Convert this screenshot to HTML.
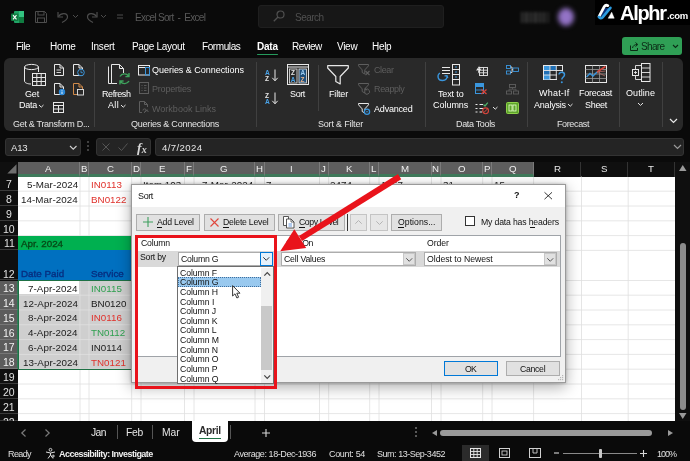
<!DOCTYPE html>
<html lang="en">
<head>
<meta charset="utf-8">
<title>Excel Sort - Excel</title>
<style>
*{box-sizing:border-box;margin:0;padding:0}
html,body{width:690px;height:461px;overflow:hidden;background:#0a0a0a}
body{font-family:"Liberation Sans",sans-serif;font-size:10px;color:#fff;position:relative}
.abs{position:absolute}
.t{position:absolute;white-space:pre;line-height:1;will-change:transform}
svg{overflow:visible;will-change:transform}
</style>
</head>
<body>
<div class="abs" style="left:0px;top:0px;width:690px;height:36px;background:#0a0a0a"></div>
<svg class="abs" style="left:11px;top:11px;" width="13" height="12" viewBox="0 0 13 12">
<rect x="3" y="0" width="10" height="12" rx="1" fill="#21a366"/>
<rect x="8" y="0" width="5" height="6" fill="#33c481"/>
<rect x="8" y="6" width="5" height="6" fill="#107c41"/>
<rect x="0" y="2.5" width="7.5" height="7.5" rx="1" fill="#107c41"/>
<path d="M2 4.2 L5.5 8.4 M5.5 4.2 L2 8.4" stroke="#fff" stroke-width="1.1"/>
</svg>
<svg class="abs" style="left:35px;top:11px;" width="12" height="12" viewBox="0 0 12 12">
<path d="M0.5 0.5 H9.5 L11.5 2.5 V11.5 H0.5 Z" fill="none" stroke="#4d4d4d" stroke-width="1"/>
<rect x="3" y="0.5" width="6" height="3.5" fill="none" stroke="#4d4d4d" stroke-width="1"/>
<rect x="2.5" y="7" width="7" height="4.5" fill="none" stroke="#4d4d4d" stroke-width="1"/>
</svg>
<svg class="abs" style="left:57px;top:11px;" width="13" height="12" viewBox="0 0 13 12">
<path d="M1 1 V6 H6" fill="none" stroke="#4d4d4d" stroke-width="1.2"/>
<path d="M1.5 5.5 C4 1.5 10.5 1.5 10.5 6 C10.5 8.5 8 10 5 11.5" fill="none" stroke="#4d4d4d" stroke-width="1.2"/>
</svg>
<svg class="abs" style="left:73px;top:15px;" width="5" height="3" viewBox="0 0 5 3"><path d="M0 0 L2.5 2.5 L5 0" fill="none" stroke="#4d4d4d" stroke-width="1"/></svg>
<svg class="abs" style="left:86px;top:11px;" width="13" height="12" viewBox="0 0 13 12">
<path d="M11 1 V6 H6" fill="none" stroke="#4d4d4d" stroke-width="1.2"/>
<path d="M10.5 5.5 C8 1.5 1.5 1.5 1.5 6 C1.5 8.5 4 10 7 11.5" fill="none" stroke="#4d4d4d" stroke-width="1.2"/>
</svg>
<svg class="abs" style="left:101px;top:15px;" width="5" height="3" viewBox="0 0 5 3"><path d="M0 0 L2.5 2.5 L5 0" fill="none" stroke="#4d4d4d" stroke-width="1"/></svg>
<svg class="abs" style="left:117px;top:14px;" width="6" height="6" viewBox="0 0 6 6"><path d="M0 1 H6 M0 4 H6" stroke="#4d4d4d" stroke-width="1"/></svg>
<div class="t" style="left:135.40px;top:12.54px;font-size:10px;color:#5a5a5a;letter-spacing:-0.713px;">Excel Sort  -  Excel</div>
<div class="abs" style="left:258px;top:5px;width:186px;height:23px;background:#171717;border:1px solid #1f1f1f;border-radius:3px"></div>
<svg class="abs" style="left:273px;top:10px;" width="12" height="12" viewBox="0 0 12 12"><circle cx="7.5" cy="4.5" r="3.5" fill="none" stroke="#505050" stroke-width="1.2"/><path d="M5 7 L0.8 11.2" stroke="#505050" stroke-width="1.3"/></svg>
<div class="t" style="left:294.50px;top:12.54px;font-size:10px;color:#505050;letter-spacing:-0.531px;">Search</div>
<div class="abs" style="left:521px;top:12px;width:28px;height:11px;background:repeating-linear-gradient(90deg,#3a3a3a 0 2px,#161616 2px 4.5px);filter:blur(1.6px);opacity:.9"></div>
<div class="abs" style="left:557.5px;top:8px;width:16px;height:18px;background:#9373c6;border-radius:50%;filter:blur(2.8px)"></div>
<div class="abs" style="left:595px;top:0px;width:95px;height:25px;background:#000"></div>
<svg class="abs" style="left:598px;top:4px;" width="17" height="16" viewBox="0 0 17 16">
<path d="M6.6 4.6 L10.2 4.6 L3.6 12 Z" fill="#0b2f7a" stroke="#0b2f7a" stroke-width="1"/>
<path d="M1.1 12.3 L6.3 2.5 Q7.7 0.5 9.9 1.7" fill="none" stroke="#fff" stroke-width="2.7" stroke-linecap="round"/>
<path d="M12.4 3.9 L4.6 13.3 Q2.6 15.3 0.9 13" fill="none" stroke="#2b9be0" stroke-width="2.7" stroke-linecap="round"/>
<path d="M13.7 8.2 L10.2 14.2 L16.2 14.2 Z" fill="#fff" stroke="#fff" stroke-width="0.5" stroke-linejoin="round"/>
</svg>
<div class="t" style="left:619.70px;top:2.57px;font-size:20px;color:#fff;letter-spacing:-1.303px;font-weight:bold;">Alphr</div>
<div class="t" style="left:666.80px;top:11.46px;font-size:9.5px;color:#fff;letter-spacing:-0.343px;font-weight:bold;">.com</div>
<div class="t" style="left:15.60px;top:41.53px;font-size:10px;color:#fff;letter-spacing:-0.528px;">File</div>
<div class="t" style="left:50.00px;top:41.53px;font-size:10px;color:#fff;letter-spacing:-0.269px;">Home</div>
<div class="t" style="left:91.40px;top:41.53px;font-size:10px;color:#fff;letter-spacing:-0.235px;">Insert</div>
<div class="t" style="left:132.40px;top:41.53px;font-size:10px;color:#fff;letter-spacing:-0.323px;">Page Layout</div>
<div class="t" style="left:201.60px;top:41.53px;font-size:10px;color:#fff;letter-spacing:-0.409px;">Formulas</div>
<div class="t" style="left:292.00px;top:41.53px;font-size:10px;color:#fff;letter-spacing:-0.498px;">Review</div>
<div class="t" style="left:336.70px;top:41.53px;font-size:10px;color:#fff;letter-spacing:-0.299px;">View</div>
<div class="t" style="left:371.70px;top:41.53px;font-size:10px;color:#fff;letter-spacing:-0.317px;">Help</div>
<div class="t" style="left:256.50px;top:41.53px;font-size:10px;color:#fff;letter-spacing:-0.219px;font-weight:bold;">Data</div>
<div class="abs" style="left:256.5px;top:53.5px;width:21px;height:1.3px;background:#259a5c;border-radius:1px"></div>
<div class="abs" style="left:622px;top:37px;width:60px;height:18px;background:#2f9f55;border-radius:3px"></div>
<svg class="abs" style="left:630px;top:42px;" width="9" height="9" viewBox="0 0 9 9"><path d="M0.5 3.5 V8.5 H7.5 V6" fill="none" stroke="#0b2b16" stroke-width="1"/><path d="M2.5 6 C3 3.5 5 2.5 7 2.5 M5.5 0.5 L7.8 2.5 L5.5 4.5" fill="none" stroke="#0b2b16" stroke-width="1"/></svg>
<div class="t" style="left:640.70px;top:41.53px;font-size:10px;color:#0b2b16;letter-spacing:-0.677px;">Share</div>
<svg class="abs" style="left:673px;top:45px;" width="5" height="3" viewBox="0 0 5 3"><path d="M0 0 L2.5 2.5 L5 0" fill="none" stroke="#0b2b16" stroke-width="1.1"/></svg>
<div class="abs" style="left:4px;top:58px;width:679px;height:73px;background:#292929;border-radius:6px"></div>
<div class="abs" style="left:94px;top:62px;width:1px;height:65px;background:#404040"></div>
<div class="abs" style="left:256px;top:62px;width:1px;height:65px;background:#404040"></div>
<div class="abs" style="left:424.5px;top:62px;width:1px;height:65px;background:#404040"></div>
<div class="abs" style="left:526.6px;top:62px;width:1px;height:65px;background:#404040"></div>
<div class="abs" style="left:619.4px;top:62px;width:1px;height:65px;background:#404040"></div>
<div class="abs" style="left:662px;top:62px;width:1px;height:65px;background:#404040"></div>
<div class="abs" style="left:317.7px;top:65px;width:1px;height:46px;background:#404040"></div>
<div class="t" style="left:12.50px;top:119.68px;font-size:9px;color:#e4e4e4;letter-spacing:-0.301px;">Get &amp; Transform D...</div>
<div class="t" style="left:131.00px;top:119.68px;font-size:9px;color:#e4e4e4;letter-spacing:-0.217px;">Queries &amp; Connections</div>
<div class="t" style="left:317.70px;top:119.68px;font-size:9px;color:#e4e4e4;letter-spacing:-0.193px;">Sort &amp; Filter</div>
<div class="t" style="left:456.00px;top:119.68px;font-size:9px;color:#e4e4e4;letter-spacing:-0.336px;">Data Tools</div>
<div class="t" style="left:557.00px;top:119.68px;font-size:9px;color:#e4e4e4;letter-spacing:-0.376px;">Forecast</div>
<svg class="abs" style="left:670px;top:119px;" width="7" height="4" viewBox="0 0 7 4"><path d="M0 0 L3.5 3.5 L7 0" fill="none" stroke="#e8e8e8" stroke-width="1.2"/></svg>
<svg class="abs" style="left:24px;top:64px;" width="22" height="23" viewBox="0 0 22 23">
<ellipse cx="7.5" cy="3" rx="7" ry="2.6" fill="none" stroke="#e8e8e8" stroke-width="1"/>
<path d="M0.5 3 V17 C0.5 19 4 20 7 20 M14.5 3 V8" fill="none" stroke="#e8e8e8" stroke-width="1"/>
<rect x="8.5" y="9.5" width="13" height="12" fill="#292929" stroke="#e8e8e8" stroke-width="1"/>
<path d="M8.5 13.5 H21.5 M8.5 17.5 H21.5 M12.8 9.5 V21.5 M17.2 9.5 V21.5" stroke="#e8e8e8" stroke-width="1"/>
</svg>
<div class="t" style="left:25.00px;top:89.88px;font-size:9px;color:#fff;letter-spacing:-0.169px;">Get</div>
<div class="t" style="left:19.00px;top:101.38px;font-size:9px;color:#fff;letter-spacing:-0.253px;">Data</div>
<svg class="abs" style="left:39px;top:104.5px;" width="4.5" height="3" viewBox="0 0 4.5 3"><path d="M0 0 L2.25 2.2 L4.5 0" fill="none" stroke="#e8e8e8" stroke-width="1"/></svg>
<svg class="abs" style="left:53.5px;top:64px;" width="11" height="12" viewBox="0 0 11 12"><path d="M0.5 0.5 H6 L9.5 4 V11.5 H0.5 Z M6 0.5 V4 H9.5" fill="none" stroke="#e8e8e8" stroke-width="1"/><path d="M2.5 6 H7 M2.5 8.5 H7" stroke="#e8e8e8" stroke-width="0.9"/></svg>
<svg class="abs" style="left:73px;top:64px;" width="11" height="12" viewBox="0 0 11 12"><path d="M0.5 0.5 H6 L9.5 4 V11.5 H0.5 Z M6 0.5 V4 H9.5" fill="none" stroke="#e8e8e8" stroke-width="1"/><circle cx="8" cy="8.5" r="3.3" fill="#292929" stroke="#3a96dd" stroke-width="1"/><path d="M8 6.5 V8.7 H9.8" stroke="#3a96dd" stroke-width="0.9" fill="none"/></svg>
<svg class="abs" style="left:53.5px;top:82.5px;" width="11" height="12" viewBox="0 0 11 12"><path d="M0.5 0.5 H6 L9.5 4 V11.5 H0.5 Z M6 0.5 V4 H9.5" fill="none" stroke="#e8e8e8" stroke-width="1"/><circle cx="8" cy="9" r="3.2" fill="#2b88d8"/><path d="M8 7.2 V7.9 M8 8.6 V11" stroke="#fff" stroke-width="0.9"/></svg>
<svg class="abs" style="left:73px;top:82.5px;" width="11" height="12" viewBox="0 0 11 12"><path d="M0.5 0.5 H6 L9.5 4 V11.5 H0.5 Z M6 0.5 V4 H9.5" fill="none" stroke="#d08a4a" stroke-width="1"/><rect x="4.5" y="6.5" width="6" height="5.5" fill="#292929" stroke="#e8e8e8" stroke-width="0.9"/></svg>
<svg class="abs" style="left:53px;top:101.5px;" width="11" height="11" viewBox="0 0 11 11"><rect x="0.5" y="0.5" width="10" height="10" fill="none" stroke="#e8e8e8" stroke-width="1"/><path d="M0.5 3.5 H10.5 M0.5 7 H10.5 M5.5 3.5 V10.5" stroke="#e8e8e8" stroke-width="1"/></svg>
<svg class="abs" style="left:108px;top:64px;" width="23" height="23" viewBox="0 0 23 23">
<path d="M0.5 2.5 V19.5 H3.5" fill="none" stroke="#e8e8e8" stroke-width="1"/>
<path d="M3.5 0.5 H11.5 L15.5 4.5 V9 M3.5 0.5 V19.5 H9 M11.5 0.5 V4.5 H15.5" fill="none" stroke="#e8e8e8" stroke-width="1"/>
<path d="M12 12.5 A5 5 0 0 1 20.5 12 M21 9 V12.6 H17.4" fill="none" stroke="#3ea35c" stroke-width="1.4"/>
<path d="M21 17 A5 5 0 0 1 12.5 17.5 M12 20.6 V17 H15.6" fill="none" stroke="#3ea35c" stroke-width="1.4"/>
</svg>
<div class="t" style="left:102.00px;top:89.88px;font-size:9px;color:#fff;letter-spacing:-0.430px;">Refresh</div>
<div class="t" style="left:107.50px;top:101.38px;font-size:9px;color:#fff;letter-spacing:0.333px;">All</div>
<svg class="abs" style="left:120.5px;top:104.5px;" width="4.5" height="3" viewBox="0 0 4.5 3"><path d="M0 0 L2.25 2.2 L4.5 0" fill="none" stroke="#e8e8e8" stroke-width="1"/></svg>
<svg class="abs" style="left:138px;top:64.5px;" width="12" height="10.5" viewBox="0 0 12 10.5"><rect x="0.5" y="0.5" width="11" height="9.5" fill="none" stroke="#e8e8e8" stroke-width="1"/><path d="M0.5 2.5 H11.5" stroke="#e8e8e8" stroke-width="1"/><rect x="7.5" y="2.5" width="4" height="7.5" fill="none" stroke="#3a96dd" stroke-width="1"/></svg>
<div class="t" style="left:152.00px;top:65.98px;font-size:9px;color:#fff;letter-spacing:-0.026px;">Queries &amp; Connections</div>
<svg class="abs" style="left:138.5px;top:82px;" width="10" height="12" viewBox="0 0 10 12"><rect x="0.5" y="0.5" width="9" height="11" fill="none" stroke="#5e5e5e" stroke-width="1"/><path d="M2.5 3.5 H3.5 M5 3.5 H7.5 M2.5 6 H3.5 M5 6 H7.5 M2.5 8.5 H3.5 M5 8.5 H7.5" stroke="#5e5e5e" stroke-width="0.9"/></svg>
<div class="t" style="left:152.00px;top:85.38px;font-size:9px;color:#5e5e5e;letter-spacing:-0.202px;">Properties</div>
<svg class="abs" style="left:138.5px;top:101px;" width="11" height="12.5" viewBox="0 0 11 12.5"><path d="M0.5 0.5 H5.5 L8.5 3.5 V6 M0.5 0.5 V11.5 H3 M5.5 0.5 V3.5 H8.5" fill="none" stroke="#5e5e5e" stroke-width="1"/><path d="M4 9.5 a1.6 1.6 0 0 1 3.2 0 M6 11 a1.6 1.6 0 0 1 3.2 0 M5 11.8 L8.5 8.8" fill="none" stroke="#5e5e5e" stroke-width="1"/></svg>
<div class="t" style="left:152.00px;top:104.68px;font-size:9px;color:#5e5e5e;letter-spacing:0.010px;">Workbook Links</div>
<svg class="abs" style="left:265px;top:68.5px;" width="14" height="13" viewBox="0 0 14 13">
<text x="0" y="5.6" font-family="Liberation Sans,sans-serif" font-size="6.6" font-weight="bold" fill="#4aa3e8">A</text>
<text x="0" y="12.4" font-family="Liberation Sans,sans-serif" font-size="6.6" font-weight="bold" fill="#e8e8e8">Z</text>
<path d="M10 0.5 V11.5 M7.3 8.8 L10 11.8 L12.7 8.8" fill="none" stroke="#e8e8e8" stroke-width="1"/></svg>
<svg class="abs" style="left:265px;top:92px;" width="14" height="13" viewBox="0 0 14 13">
<text x="0" y="5.6" font-family="Liberation Sans,sans-serif" font-size="6.6" font-weight="bold" fill="#e8e8e8">Z</text>
<text x="0" y="12.4" font-family="Liberation Sans,sans-serif" font-size="6.6" font-weight="bold" fill="#4aa3e8">A</text>
<path d="M10 0.5 V11.5 M7.3 8.8 L10 11.8 L12.7 8.8" fill="none" stroke="#e8e8e8" stroke-width="1"/></svg>
<svg class="abs" style="left:287px;top:64px;" width="22" height="21" viewBox="0 0 22 21">
<rect x="0.5" y="0.5" width="21" height="20" fill="none" stroke="#e8e8e8" stroke-width="1"/>
<path d="M0.5 3 H21.5" stroke="#e8e8e8" stroke-width="1"/>
<rect x="2.5" y="5" width="7.5" height="14" fill="none" stroke="#e8e8e8" stroke-width="0.8"/>
<rect x="12" y="5" width="7.5" height="14" fill="#1f4e79" stroke="#e8e8e8" stroke-width="0.8"/>
<text x="4" y="11" font-family="Liberation Sans,sans-serif" font-size="6.4" font-weight="bold" fill="#e8e8e8">Z</text>
<text x="3.8" y="17.8" font-family="Liberation Sans,sans-serif" font-size="6.4" font-weight="bold" fill="#4aa3e8">A</text>
<text x="13.4" y="11" font-family="Liberation Sans,sans-serif" font-size="6.4" font-weight="bold" fill="#9ccbf0">A</text>
<text x="13.6" y="17.8" font-family="Liberation Sans,sans-serif" font-size="6.4" font-weight="bold" fill="#e8b28a">Z</text>
</svg>
<div class="t" style="left:289.50px;top:89.88px;font-size:9px;color:#fff;letter-spacing:-0.377px;">Sort</div>
<svg class="abs" style="left:327px;top:65px;" width="22" height="21" viewBox="0 0 22 21"><path d="M0.7 0.7 H21.3 V3 L13.2 11.5 V19 L8.8 16.5 V11.5 L0.7 3 Z" fill="none" stroke="#e8e8e8" stroke-width="1.2" stroke-linejoin="round"/></svg>
<div class="t" style="left:329.00px;top:89.88px;font-size:9px;color:#fff;letter-spacing:-0.167px;">Filter</div>
<svg class="abs" style="left:358px;top:64px;" width="13" height="12" viewBox="0 0 13 12"><path d="M0.5 0.5 H10.5 V1.8 L6.8 5.9 V10.0 L4.2 8.5 V5.9 L0.5 1.8 Z" fill="none" stroke="#5e5e5e" stroke-width="1" stroke-linejoin="round"/><path d="M7.5 7 L11.5 11 M11.5 7 L7.5 11" stroke="#5e5e5e" stroke-width="1.1"/></svg>
<div class="t" style="left:373.50px;top:65.98px;font-size:9px;color:#5e5e5e;letter-spacing:-0.401px;">Clear</div>
<svg class="abs" style="left:358px;top:83px;" width="13" height="12" viewBox="0 0 13 12"><path d="M0.5 0.5 H10.5 V1.8 L6.8 5.9 V10.0 L4.2 8.5 V5.9 L0.5 1.8 Z" fill="none" stroke="#5e5e5e" stroke-width="1" stroke-linejoin="round"/><path d="M6.5 9.5 a2.6 2.6 0 1 0 1 -3 M7.3 4.7 V6.8 H9.4" fill="none" stroke="#5e5e5e" stroke-width="1"/></svg>
<div class="t" style="left:373.50px;top:85.38px;font-size:9px;color:#5e5e5e;letter-spacing:-0.360px;">Reapply</div>
<svg class="abs" style="left:358px;top:102.5px;" width="13" height="12" viewBox="0 0 13 12"><path d="M0.5 0.5 H10.5 V1.8 L6.8 5.9 V10.0 L4.2 8.5 V5.9 L0.5 1.8 Z" fill="none" stroke="#e8e8e8" stroke-width="1" stroke-linejoin="round"/><circle cx="9" cy="8.8" r="2.6" fill="#292929" stroke="#3a96dd" stroke-width="1.3"/><circle cx="9" cy="8.8" r="0.8" fill="#3a96dd"/></svg>
<div class="t" style="left:373.50px;top:104.68px;font-size:9px;color:#fff;letter-spacing:-0.191px;">Advanced</div>
<svg class="abs" style="left:438px;top:64px;" width="24" height="22" viewBox="0 0 24 22">
<path d="M4 3.5 H12 M4 6.5 H12 M4 9.5 H12" stroke="#e8e8e8" stroke-width="1"/>
<path d="M2 9 C-1.2 11 -0.6 16.5 4.5 16.5 C8 16.5 9.5 14 9 12 M6.5 11.8 L9 11.6 L9.8 14" fill="none" stroke="#3a96dd" stroke-width="1.3"/>
<rect x="14.5" y="0.5" width="7" height="20.5" fill="none" stroke="#e8e8e8" stroke-width="1"/>
<path d="M14.5 5.5 H21.5 M14.5 10.5 H21.5 M14.5 15.5 H21.5" stroke="#e8e8e8" stroke-width="1"/>
<path d="M17 3 H19 M17 8 H19 M17 13 H19" stroke="#3a96dd" stroke-width="0.9"/>
</svg>
<div class="t" style="left:438.00px;top:90.08px;font-size:9px;color:#fff;letter-spacing:-0.145px;">Text to</div>
<div class="t" style="left:432.70px;top:101.38px;font-size:9px;color:#fff;letter-spacing:-0.030px;">Columns</div>
<svg class="abs" style="left:474.5px;top:64.5px;" width="13" height="11" viewBox="0 0 13 11"><rect x="4.5" y="2.5" width="8" height="8" fill="none" stroke="#e8e8e8" stroke-width="0.9"/><path d="M4.5 5.2 H12.5 M4.5 7.8 H12.5 M8.5 2.5 V10.5" stroke="#e8e8e8" stroke-width="0.9"/><path d="M1 5.5 L4.5 0.5 L3.6 4 L6.5 3.4 L2.8 8.8 L3.4 5.2 Z" fill="#e8e8e8"/></svg>
<svg class="abs" style="left:475px;top:83px;" width="13" height="12" viewBox="0 0 13 12"><rect x="0.5" y="0.5" width="8" height="10" fill="none" stroke="#3a96dd" stroke-width="1"/><rect x="0.5" y="0.5" width="8" height="3.5" fill="#3a96dd"/><path d="M0.5 7 H8.5" stroke="#3a96dd" stroke-width="0.9"/><path d="M6.5 6.5 L11.5 11 M11.5 6.5 L6.5 11" stroke="#d8453b" stroke-width="1.3"/></svg>
<svg class="abs" style="left:474.5px;top:101.5px;" width="14" height="12" viewBox="0 0 14 12"><path d="M0.5 2.5 H2.5 M4.5 2.5 H8 M0.5 6.5 H2.5 M4.5 6.5 H8 M0.5 10 H2.5 M4.5 10 H7" stroke="#e8e8e8" stroke-width="1.1"/><path d="M8.5 2.5 L10 4 L12.8 0.6" fill="none" stroke="#4fb06a" stroke-width="1.2"/><circle cx="10.6" cy="8.8" r="2.9" fill="none" stroke="#d8453b" stroke-width="1.1"/><path d="M8.6 10.8 L12.6 6.8" stroke="#d8453b" stroke-width="1"/></svg>
<svg class="abs" style="left:492.5px;top:107px;" width="4.5" height="3" viewBox="0 0 4.5 3"><path d="M0 0 L2.25 2.2 L4.5 0" fill="none" stroke="#e8e8e8" stroke-width="1"/></svg>
<svg class="abs" style="left:506px;top:65px;" width="13" height="10" viewBox="0 0 13 10"><rect x="0.5" y="0.5" width="4" height="3" fill="none" stroke="#3a96dd" stroke-width="0.9"/><rect x="0.5" y="6" width="4" height="3" fill="none" stroke="#3a96dd" stroke-width="0.9"/><rect x="7" y="3" width="5.5" height="3.5" fill="none" stroke="#3a96dd" stroke-width="0.9"/><path d="M4.5 2 H6 V7.5 H4.5 M6 4.8 H7" fill="none" stroke="#e8e8e8" stroke-width="0.8"/></svg>
<svg class="abs" style="left:506px;top:83.5px;" width="13" height="11" viewBox="0 0 13 11"><rect x="3.5" y="0.5" width="6" height="3" fill="none" stroke="#5e5e5e" stroke-width="0.9"/><rect x="0.5" y="7" width="5" height="3" fill="none" stroke="#5e5e5e" stroke-width="0.9"/><rect x="7.5" y="7" width="5" height="3" fill="none" stroke="#5e5e5e" stroke-width="0.9"/><path d="M6.5 3.5 V5.2 M3 7 V5.2 H10 V7" fill="none" stroke="#5e5e5e" stroke-width="0.8"/></svg>
<svg class="abs" style="left:506px;top:101.5px;" width="13" height="12" viewBox="0 0 13 12"><rect x="0.5" y="0.5" width="12" height="11" rx="1" fill="#5da42a" stroke="#8fd14a" stroke-width="1"/><rect x="3" y="3" width="3" height="6" fill="none" stroke="#eaffd0" stroke-width="0.8"/><rect x="7" y="3" width="3" height="6" fill="none" stroke="#eaffd0" stroke-width="0.8"/></svg>
<svg class="abs" style="left:543px;top:65px;" width="24" height="19" viewBox="0 0 24 19">
<rect x="0.5" y="0.5" width="19" height="14" fill="none" stroke="#e8e8e8" stroke-width="1"/>
<rect x="1" y="1" width="6" height="4.5" fill="#3a96dd"/><rect x="7.3" y="1" width="6" height="4.5" fill="#1f6fb5"/>
<rect x="1" y="5.5" width="6" height="4.5" fill="#1f6fb5"/><rect x="1" y="10" width="6" height="4.5" fill="#3a96dd"/>
<path d="M0.5 5.5 H19.5 M0.5 10 H19.5 M7 0.5 V14.5 M13.3 0.5 V14.5" stroke="#e8e8e8" stroke-width="0.9"/>
<rect x="14" y="6.5" width="10" height="12" fill="#292929"/>
<path d="M16 9.5 C16 6.5 21.5 6.5 21.5 9.8 C21.5 12 18.8 12 18.8 14.5" fill="none" stroke="#3a96dd" stroke-width="1.5"/><circle cx="18.8" cy="17.2" r="1" fill="#3a96dd"/>
</svg>
<div class="t" style="left:539.00px;top:89.38px;font-size:9px;color:#fff;letter-spacing:0.214px;">What-If</div>
<div class="t" style="left:533.60px;top:100.98px;font-size:9px;color:#fff;letter-spacing:-0.202px;">Analysis</div>
<svg class="abs" style="left:568px;top:104px;" width="4.5" height="3" viewBox="0 0 4.5 3"><path d="M0 0 L2.25 2.2 L4.5 0" fill="none" stroke="#e8e8e8" stroke-width="1"/></svg>
<svg class="abs" style="left:584.5px;top:65px;" width="22" height="18" viewBox="0 0 22 18">
<rect x="0.5" y="0.5" width="21" height="17" fill="none" stroke="#e8e8e8" stroke-width="1"/>
<path d="M0.5 4.5 H21.5 M0.5 9 H21.5 M0.5 13.5 H21.5 M7.5 0.5 V17.5 M14.5 0.5 V17.5" stroke="#9a9a9a" stroke-width="0.8"/>
<path d="M1.5 12 L5 8.5 L8 11 L12 7" fill="none" stroke="#3a96dd" stroke-width="1.3"/>
<path d="M12 7 L20.5 1.5" fill="none" stroke="#d8453b" stroke-width="1.5"/>
<path d="M12 7 L20.5 6 M12 7 L20 11" fill="none" stroke="#b46a62" stroke-width="0.8"/>
</svg>
<div class="t" style="left:579.00px;top:89.38px;font-size:9px;color:#fff;letter-spacing:-0.251px;">Forecast</div>
<div class="t" style="left:585.00px;top:100.98px;font-size:9px;color:#fff;letter-spacing:-0.304px;">Sheet</div>
<svg class="abs" style="left:631.5px;top:63px;" width="18.5" height="19" viewBox="0 0 18.5 19">
<rect x="9.5" y="0.5" width="8.5" height="18" fill="none" stroke="#e8e8e8" stroke-width="1"/>
<path d="M9.5 5 H18 M9.5 9.5 H18 M9.5 14 H18" stroke="#e8e8e8" stroke-width="0.9"/>
<rect x="0.5" y="6.5" width="6" height="6" fill="none" stroke="#e8e8e8" stroke-width="1"/>
<path d="M2 9.5 H5 M3.5 8 V11" stroke="#e8e8e8" stroke-width="0.9"/>
<path d="M3.5 6.5 V2.5 H9.5 M3.5 12.5 V16.5 H9.5" fill="none" stroke="#e8e8e8" stroke-width="0.9"/>
</svg>
<div class="t" style="left:626.00px;top:88.68px;font-size:9px;color:#fff;letter-spacing:0.069px;">Outline</div>
<svg class="abs" style="left:637.5px;top:103px;" width="5" height="3" viewBox="0 0 5 3"><path d="M0 0 L2.5 2.4 L5 0" fill="none" stroke="#e8e8e8" stroke-width="1"/></svg>
<div class="abs" style="left:0px;top:131px;width:690px;height:31px;background:#0a0a0a"></div>
<div class="abs" style="left:5px;top:137.6px;width:76px;height:18.7px;background:#242424;border:1px solid #333;border-radius:3px"></div>
<div class="t" style="left:10.70px;top:142.87px;font-size:9.6px;color:#e6e6e6;letter-spacing:-0.260px;">A13</div>
<svg class="abs" style="left:69.5px;top:145.5px;" width="6.5" height="4" viewBox="0 0 6.5 4"><path d="M0 0 L3.25 3.2 L6.5 0" fill="none" stroke="#d0d0d0" stroke-width="1.1"/></svg>
<svg class="abs" style="left:87.3px;top:141px;" width="2" height="10" viewBox="0 0 2 10"><circle cx="1" cy="1" r="0.8" fill="#8a8a8a"/><circle cx="1" cy="5" r="0.8" fill="#8a8a8a"/><circle cx="1" cy="9" r="0.8" fill="#8a8a8a"/></svg>
<div class="abs" style="left:96px;top:137.6px;width:55px;height:18.7px;background:#242424;border:1px solid #333;border-radius:3px"></div>
<svg class="abs" style="left:102px;top:143px;" width="8" height="8" viewBox="0 0 8 8"><path d="M0.5 0.5 L7.5 7.5 M7.5 0.5 L0.5 7.5" stroke="#555" stroke-width="1"/></svg>
<svg class="abs" style="left:118px;top:143px;" width="10" height="8" viewBox="0 0 10 8"><path d="M0.5 4.5 L3.5 7.5 L9.5 0.5" fill="none" stroke="#555" stroke-width="1"/></svg>
<div class="t" style="left:137px;top:140.6px;font-size:13.5px;color:#d8d8d8;font-family:&quot;Liberation Serif&quot;,serif;font-style:italic;font-weight:bold;letter-spacing:0.3px">f<span style="font-size:10px;position:relative;top:1px">x</span></div>
<div class="abs" style="left:154.5px;top:137.6px;width:529.5px;height:18.7px;background:#242424;border:1px solid #333;border-radius:3px"></div>
<div class="t" style="left:162.00px;top:142.87px;font-size:9.6px;color:#e6e6e6;letter-spacing:0.391px;">4/7/2024</div>
<svg class="abs" style="left:673.5px;top:144.5px;" width="7" height="4" viewBox="0 0 7 4"><path d="M0 0 L3.5 3.4 L7 0" fill="none" stroke="#9a9a9a" stroke-width="1.2"/></svg>
<div class="abs" style="left:0px;top:162px;width:690px;height:259px;background:#0f0f0f"></div>
<div class="abs" style="left:18px;top:176.5px;width:657px;height:244.5px;background:#fff"></div>
<div class="abs" style="left:18px;top:235.6px;width:114px;height:14.8px;background:#00b050"></div>
<div class="abs" style="left:18px;top:250.4px;width:114px;height:30.1px;background:#0070c0"></div>
<div class="abs" style="left:18px;top:280.5px;width:515.6px;height:88.7px;background:#cfcfcf"></div>
<div class="abs" style="left:18.8px;top:281.3px;width:60.4px;height:13.2px;background:#fff"></div>
<svg class="abs" style="left:0px;top:0px;pointer-events:none" width="690" height="461" viewBox="0 0 690 461"><g stroke="#e0e0e0" stroke-width="0.8" fill="none"><path d="M80 176.5 V421"/><path d="M89 176.5 V421"/><path d="M131.7 176.5 V421"/><path d="M141 176.5 V421"/><path d="M184.5 176.5 V421"/><path d="M194 176.5 V421"/><path d="M255 176.5 V421"/><path d="M264.5 176.5 V421"/><path d="M319.5 176.5 V421"/><path d="M328.7 176.5 V421"/><path d="M369.7 176.5 V421"/><path d="M379 176.5 V421"/><path d="M431.5 176.5 V421"/><path d="M441 176.5 V421"/><path d="M482.7 176.5 V421"/><path d="M492 176.5 V421"/><path d="M533.6 176.5 V421"/><path d="M581.5 176.5 V421"/><path d="M628.2 176.5 V421"/><path d="M18 191.2 H675"/><path d="M18 206 H675"/><path d="M18 220.8 H675"/><path d="M18 235.6 H675"/><path d="M18 250.4 H675"/><path d="M18 280.5 H675"/><path d="M18 295.2 H675"/><path d="M18 310 H675"/><path d="M18 324.8 H675"/><path d="M18 339.6 H675"/><path d="M18 354.4 H675"/><path d="M18 369.2 H675"/><path d="M18 384 H675"/><path d="M18 398.8 H675"/><path d="M18 413.6 H675"/></g></svg>
<div class="abs" style="left:18px;top:236px;width:113.4px;height:14.4px;background:#00b050"></div>
<div class="abs" style="left:18px;top:250.4px;width:113.4px;height:29.8px;background:#0070c0"></div>
<div class="abs" style="left:18px;top:279.9px;width:516px;height:90px;border:1.3px solid #1e7145;border-top-width:1px"></div>
<div class="abs" style="left:0px;top:162px;width:18px;height:15px;background:#0f0f0f"></div>
<svg class="abs" style="left:6.8px;top:164.2px;" width="10" height="10" viewBox="0 0 10 10"><path d="M9.5 0.3 V9.5 H0.3 Z" fill="#6e6e6e"/></svg>
<div class="abs" style="left:18px;top:162px;width:62px;height:14.5px;background:#5e5e5e;border-right:1px solid #7a7a7a;border-bottom:3.3px solid #3f7a5b"></div>
<div class="t" style="left:45.47px;top:163.79px;font-size:9.7px;color:#f0f0f0;">A</div>
<div class="abs" style="left:80px;top:162px;width:9px;height:14.5px;background:#5e5e5e;border-right:1px solid #7a7a7a;border-bottom:3.3px solid #3f7a5b"></div>
<div class="t" style="left:80.97px;top:163.79px;font-size:9.7px;color:#f0f0f0;">B</div>
<div class="abs" style="left:89px;top:162px;width:42.69999999999999px;height:14.5px;background:#5e5e5e;border-right:1px solid #7a7a7a;border-bottom:3.3px solid #3f7a5b"></div>
<div class="t" style="left:106.55px;top:163.79px;font-size:9.7px;color:#f0f0f0;">C</div>
<div class="abs" style="left:131.7px;top:162px;width:9.300000000000011px;height:14.5px;background:#5e5e5e;border-right:1px solid #7a7a7a;border-bottom:3.3px solid #3f7a5b"></div>
<div class="t" style="left:132.55px;top:163.79px;font-size:9.7px;color:#f0f0f0;">D</div>
<div class="abs" style="left:141px;top:162px;width:43.5px;height:14.5px;background:#5e5e5e;border-right:1px solid #7a7a7a;border-bottom:3.3px solid #3f7a5b"></div>
<div class="t" style="left:159.22px;top:163.79px;font-size:9.7px;color:#f0f0f0;">E</div>
<div class="abs" style="left:184.5px;top:162px;width:9.5px;height:14.5px;background:#5e5e5e;border-right:1px solid #7a7a7a;border-bottom:3.3px solid #3f7a5b"></div>
<div class="t" style="left:185.99px;top:163.79px;font-size:9.7px;color:#f0f0f0;">F</div>
<div class="abs" style="left:194px;top:162px;width:61px;height:14.5px;background:#5e5e5e;border-right:1px solid #7a7a7a;border-bottom:3.3px solid #3f7a5b"></div>
<div class="t" style="left:220.43px;top:163.79px;font-size:9.7px;color:#f0f0f0;">G</div>
<div class="abs" style="left:255px;top:162px;width:9.5px;height:14.5px;background:#5e5e5e;border-right:1px solid #7a7a7a;border-bottom:3.3px solid #3f7a5b"></div>
<div class="t" style="left:255.95px;top:163.79px;font-size:9.7px;color:#f0f0f0;">H</div>
<div class="abs" style="left:264.5px;top:162px;width:55.0px;height:14.5px;background:#5e5e5e;border-right:1px solid #7a7a7a;border-bottom:3.3px solid #3f7a5b"></div>
<div class="t" style="left:290.35px;top:163.79px;font-size:9.7px;color:#f0f0f0;">I</div>
<div class="abs" style="left:319.5px;top:162px;width:9.199999999999989px;height:14.5px;background:#5e5e5e;border-right:1px solid #7a7a7a;border-bottom:3.3px solid #3f7a5b"></div>
<div class="t" style="left:321.38px;top:163.79px;font-size:9.7px;color:#f0f0f0;">J</div>
<div class="abs" style="left:328.7px;top:162px;width:41.0px;height:14.5px;background:#5e5e5e;border-right:1px solid #7a7a7a;border-bottom:3.3px solid #3f7a5b"></div>
<div class="t" style="left:345.67px;top:163.79px;font-size:9.7px;color:#f0f0f0;">K</div>
<div class="abs" style="left:369.7px;top:162px;width:9.300000000000011px;height:14.5px;background:#5e5e5e;border-right:1px solid #7a7a7a;border-bottom:3.3px solid #3f7a5b"></div>
<div class="t" style="left:371.35px;top:163.79px;font-size:9.7px;color:#f0f0f0;">L</div>
<div class="abs" style="left:379px;top:162px;width:52.5px;height:14.5px;background:#5e5e5e;border-right:1px solid #7a7a7a;border-bottom:3.3px solid #3f7a5b"></div>
<div class="t" style="left:400.91px;top:163.79px;font-size:9.7px;color:#f0f0f0;">M</div>
<div class="abs" style="left:431.5px;top:162px;width:9.5px;height:14.5px;background:#5e5e5e;border-right:1px solid #7a7a7a;border-bottom:3.3px solid #3f7a5b"></div>
<div class="t" style="left:432.45px;top:163.79px;font-size:9.7px;color:#f0f0f0;">N</div>
<div class="abs" style="left:441px;top:162px;width:41.69999999999999px;height:14.5px;background:#5e5e5e;border-right:1px solid #7a7a7a;border-bottom:3.3px solid #3f7a5b"></div>
<div class="t" style="left:457.78px;top:163.79px;font-size:9.7px;color:#f0f0f0;">O</div>
<div class="abs" style="left:482.7px;top:162px;width:9.300000000000011px;height:14.5px;background:#5e5e5e;border-right:1px solid #7a7a7a;border-bottom:3.3px solid #3f7a5b"></div>
<div class="t" style="left:483.82px;top:163.79px;font-size:9.7px;color:#f0f0f0;">P</div>
<div class="abs" style="left:492px;top:162px;width:41.60000000000002px;height:14.5px;background:#5e5e5e;border-right:1px solid #7a7a7a;border-bottom:3.3px solid #3f7a5b"></div>
<div class="t" style="left:508.73px;top:163.79px;font-size:9.7px;color:#f0f0f0;">Q</div>
<div class="abs" style="left:533.6px;top:162px;width:47.89999999999998px;height:15.2px;background:#0f0f0f;border-right:1px solid #333"></div>
<div class="t" style="left:553.75px;top:163.79px;font-size:9.7px;color:#e8e8e8;">R</div>
<div class="abs" style="left:581.5px;top:162px;width:46.700000000000045px;height:15.2px;background:#0f0f0f;border-right:1px solid #333"></div>
<div class="t" style="left:601.32px;top:163.79px;font-size:9.7px;color:#e8e8e8;">S</div>
<div class="abs" style="left:628.2px;top:162px;width:46.799999999999955px;height:15.2px;background:#0f0f0f;border-right:1px solid #333"></div>
<div class="t" style="left:648.34px;top:163.79px;font-size:9.7px;color:#e8e8e8;">T</div>
<div class="abs" style="left:0px;top:176.4px;width:18px;height:14.799999999999983px;background:#0f0f0f;border-bottom:1px solid #3a3a3a"></div>
<div class="t" style="left:6.38px;top:179.21px;font-size:10.5px;color:#e0e0e0;">7</div>
<div class="abs" style="left:0px;top:191.2px;width:18px;height:14.800000000000011px;background:#0f0f0f;border-bottom:1px solid #3a3a3a"></div>
<div class="t" style="left:6.38px;top:194.01px;font-size:10.5px;color:#e0e0e0;">8</div>
<div class="abs" style="left:0px;top:206px;width:18px;height:14.800000000000011px;background:#0f0f0f;border-bottom:1px solid #3a3a3a"></div>
<div class="t" style="left:6.38px;top:208.81px;font-size:10.5px;color:#e0e0e0;">9</div>
<div class="abs" style="left:0px;top:220.8px;width:18px;height:14.799999999999983px;background:#0f0f0f;border-bottom:1px solid #3a3a3a"></div>
<div class="t" style="left:3.46px;top:223.61px;font-size:10.5px;color:#e0e0e0;">10</div>
<div class="abs" style="left:0px;top:235.6px;width:18px;height:14.800000000000011px;background:#0f0f0f;border-bottom:1px solid #3a3a3a"></div>
<div class="t" style="left:3.85px;top:238.41px;font-size:10.5px;color:#e0e0e0;">11</div>
<div class="abs" style="left:0px;top:250.4px;width:18px;height:30.099999999999994px;background:#0f0f0f;border-bottom:1px solid #3a3a3a"></div>
<div class="t" style="left:3.46px;top:268.51px;font-size:10.5px;color:#e0e0e0;">12</div>
<div class="abs" style="left:0px;top:280.5px;width:18px;height:14.699999999999989px;background:#5c5c5c;border-bottom:1px solid #777;border-right:1.5px solid #2f7d57"></div>
<div class="t" style="left:3.46px;top:283.21px;font-size:10.5px;color:#f2f2f2;">13</div>
<div class="abs" style="left:0px;top:295.2px;width:18px;height:14.800000000000011px;background:#5c5c5c;border-bottom:1px solid #777;border-right:1.5px solid #2f7d57"></div>
<div class="t" style="left:3.46px;top:298.01px;font-size:10.5px;color:#f2f2f2;">14</div>
<div class="abs" style="left:0px;top:310px;width:18px;height:14.800000000000011px;background:#5c5c5c;border-bottom:1px solid #777;border-right:1.5px solid #2f7d57"></div>
<div class="t" style="left:3.46px;top:312.81px;font-size:10.5px;color:#f2f2f2;">15</div>
<div class="abs" style="left:0px;top:324.8px;width:18px;height:14.800000000000011px;background:#5c5c5c;border-bottom:1px solid #777;border-right:1.5px solid #2f7d57"></div>
<div class="t" style="left:3.46px;top:327.61px;font-size:10.5px;color:#f2f2f2;">16</div>
<div class="abs" style="left:0px;top:339.6px;width:18px;height:14.799999999999955px;background:#5c5c5c;border-bottom:1px solid #777;border-right:1.5px solid #2f7d57"></div>
<div class="t" style="left:3.46px;top:342.41px;font-size:10.5px;color:#f2f2f2;">17</div>
<div class="abs" style="left:0px;top:354.4px;width:18px;height:14.800000000000011px;background:#5c5c5c;border-bottom:1px solid #777;border-right:1.5px solid #2f7d57"></div>
<div class="t" style="left:3.46px;top:357.21px;font-size:10.5px;color:#f2f2f2;">18</div>
<div class="abs" style="left:0px;top:369.2px;width:18px;height:14.800000000000011px;background:#0f0f0f;border-bottom:1px solid #3a3a3a"></div>
<div class="t" style="left:3.46px;top:372.01px;font-size:10.5px;color:#e0e0e0;">19</div>
<div class="abs" style="left:0px;top:384px;width:18px;height:14.800000000000011px;background:#0f0f0f;border-bottom:1px solid #3a3a3a"></div>
<div class="t" style="left:3.46px;top:386.81px;font-size:10.5px;color:#e0e0e0;">20</div>
<div class="abs" style="left:0px;top:398.8px;width:18px;height:14.800000000000011px;background:#0f0f0f;border-bottom:1px solid #3a3a3a"></div>
<div class="t" style="left:3.46px;top:401.61px;font-size:10.5px;color:#e0e0e0;">21</div>
<div class="abs" style="left:0px;top:413.6px;width:18px;height:7.399999999999977px;background:#0f0f0f;border-bottom:1px solid #3a3a3a"></div>
<div class="t" style="left:3.46px;top:417.11px;font-size:10.5px;color:#e0e0e0;">22</div>
<div class="t" style="left:26.54px;top:179.80px;font-size:9.8px;color:#1a1a1a;letter-spacing:0.061px;">5-Mar-2024</div>
<div class="t" style="left:21.02px;top:194.60px;font-size:9.8px;color:#1a1a1a;letter-spacing:0.061px;">14-Mar-2024</div>
<div class="t" style="left:90.60px;top:179.80px;font-size:9.8px;color:#e0312b;letter-spacing:0.015px;">IN0113</div>
<div class="t" style="left:90.60px;top:194.60px;font-size:9.8px;color:#e0312b;letter-spacing:0.018px;">BN0122</div>
<div class="t" style="left:142.60px;top:179.80px;font-size:9.8px;color:#1a1a1a;letter-spacing:0.014px;">Item 103</div>
<div class="t" style="left:201.54px;top:179.80px;font-size:9.8px;color:#1a1a1a;letter-spacing:0.061px;">7-Mar-2024</div>
<div class="t" style="left:266.10px;top:179.80px;font-size:9.8px;color:#1a1a1a;">7</div>
<div class="t" style="left:330.30px;top:179.80px;font-size:9.8px;color:#1a1a1a;letter-spacing:0.016px;">2474</div>
<div class="t" style="left:380.60px;top:179.80px;font-size:9.8px;color:#1a1a1a;letter-spacing:0.016px;">1357</div>
<div class="t" style="left:442.60px;top:179.80px;font-size:9.8px;color:#1a1a1a;letter-spacing:0.016px;">31</div>
<div class="t" style="left:493.60px;top:179.80px;font-size:9.8px;color:#1a1a1a;letter-spacing:0.016px;">15</div>
<div class="t" style="left:20.90px;top:239.00px;font-size:9.8px;color:#064a17;letter-spacing:0.014px;-webkit-text-stroke:0.35px #064a17;">Apr. 2024</div>
<div class="t" style="left:20.90px;top:269.10px;font-size:9.8px;color:#062f80;letter-spacing:0.014px;-webkit-text-stroke:0.35px #062f80;">Date Paid</div>
<div class="t" style="left:91.20px;top:269.10px;font-size:9.8px;color:#062f80;letter-spacing:0.014px;-webkit-text-stroke:0.35px #062f80;">Service</div>
<div class="t" style="left:28.18px;top:283.80px;font-size:9.8px;color:#1a1a1a;letter-spacing:0.059px;">7-Apr-2024</div>
<div class="t" style="left:90.60px;top:283.80px;font-size:9.8px;color:#2fa050;letter-spacing:0.015px;">IN0115</div>
<div class="t" style="left:22.67px;top:298.60px;font-size:9.8px;color:#1a1a1a;letter-spacing:0.059px;">12-Apr-2024</div>
<div class="t" style="left:90.60px;top:298.60px;font-size:9.8px;color:#1a1a1a;letter-spacing:0.018px;">BN0120</div>
<div class="t" style="left:28.18px;top:313.40px;font-size:9.8px;color:#1a1a1a;letter-spacing:0.059px;">8-Apr-2024</div>
<div class="t" style="left:90.60px;top:313.40px;font-size:9.8px;color:#e0312b;letter-spacing:0.015px;">IN0116</div>
<div class="t" style="left:28.18px;top:328.20px;font-size:9.8px;color:#1a1a1a;letter-spacing:0.059px;">4-Apr-2024</div>
<div class="t" style="left:90.60px;top:328.20px;font-size:9.8px;color:#2fa050;letter-spacing:0.017px;">TN0112</div>
<div class="t" style="left:28.18px;top:343.00px;font-size:9.8px;color:#1a1a1a;letter-spacing:0.059px;">6-Apr-2024</div>
<div class="t" style="left:90.60px;top:343.00px;font-size:9.8px;color:#1a1a1a;letter-spacing:0.015px;">IN0114</div>
<div class="t" style="left:22.67px;top:357.80px;font-size:9.8px;color:#1a1a1a;letter-spacing:0.059px;">13-Apr-2024</div>
<div class="t" style="left:90.60px;top:357.80px;font-size:9.8px;color:#e0312b;letter-spacing:0.017px;">TN0121</div>
<div class="abs" style="left:675px;top:162px;width:15px;height:259px;background:#0f0f0f"></div>
<svg class="abs" style="left:678.8px;top:165px;" width="7.5" height="6" viewBox="0 0 7.5 6"><path d="M0 6 L3.75 0 L7.5 6 Z" fill="#9a9a9a"/></svg>
<svg class="abs" style="left:679.2px;top:413.3px;" width="7.5" height="6" viewBox="0 0 7.5 6"><path d="M0 0 L3.75 6 L7.5 0 Z" fill="#9a9a9a"/></svg>
<div class="abs" style="left:679.8px;top:242.5px;width:6.4px;height:167.5px;background:#8c8c8c;border-radius:3.2px"></div>
<div class="abs" style="left:0px;top:421px;width:690px;height:24px;background:#0a0a0a"></div>
<svg class="abs" style="left:20.5px;top:428.5px;" width="5" height="8" viewBox="0 0 5 8"><path d="M4.5 0.5 L0.8 4 L4.5 7.5" fill="none" stroke="#7a7a7a" stroke-width="1.2"/></svg>
<svg class="abs" style="left:45px;top:428.5px;" width="5" height="8" viewBox="0 0 5 8"><path d="M0.5 0.5 L4.2 4 L0.5 7.5" fill="none" stroke="#7a7a7a" stroke-width="1.2"/></svg>
<div class="t" style="left:91.00px;top:427.58px;font-size:10.3px;color:#e6e6e6;letter-spacing:-0.536px;">Jan</div>
<div class="abs" style="left:116.5px;top:425px;width:1px;height:14px;background:#555"></div>
<div class="t" style="left:125.70px;top:427.58px;font-size:10.3px;color:#e6e6e6;letter-spacing:-0.316px;">Feb</div>
<div class="abs" style="left:152px;top:425px;width:1px;height:14px;background:#555"></div>
<div class="t" style="left:162.00px;top:427.58px;font-size:10.3px;color:#e6e6e6;letter-spacing:-0.080px;">Mar</div>
<div class="abs" style="left:192px;top:421px;width:35.5px;height:20.5px;background:#fff;border-radius:0 0 4px 4px"></div>
<div class="t" style="left:199.00px;top:426.48px;font-size:10.3px;color:#2b2b2b;letter-spacing:-0.352px;font-weight:bold;">April</div>
<div class="abs" style="left:199px;top:437.8px;width:21.7px;height:1.5px;background:#1e7145"></div>
<div class="abs" style="left:230px;top:425px;width:1px;height:14px;background:#555"></div>
<svg class="abs" style="left:261.5px;top:428.5px;" width="8" height="8" viewBox="0 0 8 8"><path d="M4 0 V8 M0 4 H8" stroke="#d8d8d8" stroke-width="1.1"/></svg>
<svg class="abs" style="left:415.3px;top:426.5px;" width="2" height="10" viewBox="0 0 2 10"><circle cx="1" cy="1" r="0.8" fill="#bdbdbd"/><circle cx="1" cy="5" r="0.8" fill="#bdbdbd"/><circle cx="1" cy="9" r="0.8" fill="#bdbdbd"/></svg>
<svg class="abs" style="left:431.5px;top:429.5px;" width="5" height="6" viewBox="0 0 5 6"><path d="M5 0 L0 3 L5 6 Z" fill="#9a9a9a"/></svg>
<div class="abs" style="left:440px;top:429.5px;width:212px;height:6.2px;background:#9a9a9a;border-radius:3.1px"></div>
<svg class="abs" style="left:667.5px;top:429.5px;" width="5" height="6" viewBox="0 0 5 6"><path d="M0 0 L5 3 L0 6 Z" fill="#9a9a9a"/></svg>
<div class="abs" style="left:0px;top:445px;width:690px;height:16px;background:#0a0a0a"></div>
<div class="t" style="left:7.50px;top:449.68px;font-size:9px;color:#e0e0e0;letter-spacing:-0.603px;">Ready</div>
<svg class="abs" style="left:45px;top:448px;" width="11" height="11" viewBox="0 0 11 11"><circle cx="5.5" cy="1.8" r="1.4" fill="none" stroke="#e0e0e0" stroke-width="0.9"/><path d="M1 4 L5.5 5 L10 4 M5.5 5 V7 M5.5 7 L3 10.5 M5.5 7 L8 10.5" fill="none" stroke="#e0e0e0" stroke-width="1"/><path d="M6.5 8 L10 8 M8.2 6.5 V9.8" stroke="#e0e0e0" stroke-width="0.8"/></svg>
<div class="t" style="left:58.70px;top:449.68px;font-size:9px;color:#f0f0f0;letter-spacing:-0.529px;font-weight:bold;">Accessibility: Investigate</div>
<div class="t" style="left:234.00px;top:449.68px;font-size:9px;color:#e0e0e0;letter-spacing:-0.420px;">Average: 18-Dec-1936</div>
<div class="t" style="left:329.00px;top:449.68px;font-size:9px;color:#e0e0e0;letter-spacing:-0.336px;">Count: 54</div>
<div class="t" style="left:377.00px;top:449.68px;font-size:9px;color:#e0e0e0;letter-spacing:-0.472px;">Sum: 13-Sep-3452</div>
<div class="abs" style="left:461.5px;top:445px;width:27.5px;height:16px;background:#2b2b2b"></div>
<svg class="abs" style="left:469.5px;top:447.5px;" width="11" height="10" viewBox="0 0 11 10"><rect x="0.5" y="0.5" width="10" height="9" fill="none" stroke="#e6e6e6" stroke-width="1"/><path d="M0.5 3.5 H10.5 M0.5 6.5 H10.5 M3.8 0.5 V9.5 M7.2 0.5 V9.5" stroke="#e6e6e6" stroke-width="0.9"/></svg>
<svg class="abs" style="left:499px;top:447.5px;" width="11" height="10" viewBox="0 0 11 10"><rect x="0.5" y="0.5" width="10" height="9" fill="none" stroke="#d0d0d0" stroke-width="1"/><rect x="3" y="3" width="5" height="4" fill="none" stroke="#d0d0d0" stroke-width="0.9"/></svg>
<svg class="abs" style="left:528.5px;top:447.5px;" width="12" height="10" viewBox="0 0 12 10"><rect x="0.5" y="0.5" width="11" height="9" fill="none" stroke="#d0d0d0" stroke-width="1"/><path d="M4 0.5 V5 H8 V0.5" fill="none" stroke="#d0d0d0" stroke-width="0.9"/></svg>
<svg class="abs" style="left:554px;top:452px;" width="5" height="2" viewBox="0 0 5 2"><path d="M0 1 H5" stroke="#d8d8d8" stroke-width="1.1"/></svg>
<div class="abs" style="left:562.6px;top:452.5px;width:74.5px;height:1px;background:#8a8a8a"></div>
<div class="abs" style="left:599px;top:448.5px;width:3px;height:9px;background:#c8c8c8;border-radius:1px"></div>
<svg class="abs" style="left:640px;top:449.5px;" width="7" height="7" viewBox="0 0 7 7"><path d="M3.5 0 V7 M0 3.5 H7" stroke="#d8d8d8" stroke-width="1.1"/></svg>
<div class="t" style="left:657.00px;top:449.68px;font-size:9px;color:#e0e0e0;letter-spacing:-1.005px;">100%</div>
<div class="abs" style="left:130.7px;top:184px;width:435.3px;height:198.9px;background:#f0f0f0;border:1px solid #9a9a9a;box-shadow:0 4px 14px rgba(0,0,0,.33),0 0 3px rgba(0,0,0,.25)"></div>
<div class="abs" style="left:131.7px;top:185px;width:433.3px;height:21.7px;background:#fff"></div>
<div class="t" style="left:137.50px;top:191.78px;font-size:9.0px;color:#111;letter-spacing:-0.377px;">Sort</div>
<div class="t" style="left:513.60px;top:191.38px;font-size:9px;color:#111;font-weight:bold;">?</div>
<svg class="abs" style="left:544px;top:191.5px;" width="8.5" height="7.5" viewBox="0 0 8.5 7.5"><path d="M0.5 0.3 L8 7.2 M8 0.3 L0.5 7.2" stroke="#222" stroke-width="0.9"/></svg>
<div class="abs" style="left:136px;top:213.5px;width:63.5px;height:17.7px;background:#e1e1e1;border:1px solid #adadad"></div>
<svg class="abs" style="left:142.5px;top:216.8px;" width="10" height="10" viewBox="0 0 10 10"><path d="M5 0 V10 M0 5 H10" stroke="#3f9f5f" stroke-width="1.1"/></svg>
<div class="t" style="left:156.70px;top:218.44px;font-size:8.7px;color:#111;letter-spacing:-0.211px;">Add Level</div>
<div class="abs" style="left:156.9px;top:227.2px;width:5.400000000000006px;height:0.8px;background:#111"></div>
<div class="abs" style="left:203.7px;top:213.5px;width:71.5px;height:17.7px;background:#e1e1e1;border:1px solid #adadad"></div>
<svg class="abs" style="left:210px;top:217.5px;" width="9" height="9" viewBox="0 0 9 9"><path d="M0.5 0.5 L8.5 8.5 M8.5 0.5 L0.5 8.5" stroke="#e0463c" stroke-width="1.1"/></svg>
<div class="t" style="left:223.00px;top:218.44px;font-size:8.7px;color:#111;letter-spacing:-0.239px;">Delete Level</div>
<div class="abs" style="left:223.2px;top:227.2px;width:6.0px;height:0.8px;background:#111"></div>
<div class="abs" style="left:278px;top:213.5px;width:67px;height:17.7px;background:#e1e1e1;border:1px solid #adadad"></div>
<svg class="abs" style="left:283px;top:216px;" width="12" height="12.5" viewBox="0 0 12 12.5"><path d="M0.5 0.5 H5.5 V9.5 H0.5 Z" fill="#fff" stroke="#444" stroke-width="0.9"/><path d="M3.5 3 H8 L11 6 V12 H3.5 Z" fill="#fff" stroke="#444" stroke-width="0.9"/><path d="M8 3 V6 H11" fill="none" stroke="#444" stroke-width="0.8"/><path d="M5.5 8 H9 M5.5 10 H9" stroke="#3a7bd5" stroke-width="0.8"/></svg>
<div class="t" style="left:298.60px;top:218.44px;font-size:8.7px;color:#111;letter-spacing:-0.413px;">Copy Level</div>
<div class="abs" style="left:298.8px;top:227.2px;width:5.800000000000011px;height:0.8px;background:#111"></div>
<div class="abs" style="left:347px;top:214px;width:1px;height:17px;background:#333"></div>
<div class="abs" style="left:350px;top:213.5px;width:17.2px;height:17.7px;background:#e6e6e6;border:1px solid #c4c4c4"></div>
<svg class="abs" style="left:355.3px;top:220px;" width="7" height="4" viewBox="0 0 7 4"><path d="M0.3 3.7 L3.5 0.5 L6.7 3.7" fill="none" stroke="#b4b4b4" stroke-width="1"/></svg>
<div class="abs" style="left:370.4px;top:213.5px;width:17.2px;height:17.7px;background:#e6e6e6;border:1px solid #c4c4c4"></div>
<svg class="abs" style="left:375.6px;top:220.5px;" width="7" height="4" viewBox="0 0 7 4"><path d="M0.3 0.3 L3.5 3.5 L6.7 0.3" fill="none" stroke="#b4b4b4" stroke-width="1"/></svg>
<div class="abs" style="left:391px;top:213.5px;width:51px;height:17.7px;background:#e1e1e1;border:1px solid #adadad"></div>
<div class="t" style="left:397.50px;top:218.44px;font-size:8.7px;color:#111;letter-spacing:0.027px;">Options...</div>
<div class="abs" style="left:397.7px;top:227.2px;width:6.600000000000023px;height:0.8px;background:#111"></div>
<div class="abs" style="left:465.4px;top:216.4px;width:10px;height:10px;background:#fff;border:1px solid #333"></div>
<div class="t" style="left:481.00px;top:218.34px;font-size:8.7px;color:#111;letter-spacing:-0.171px;">My data has headers</div>
<div class="abs" style="left:530.2px;top:227px;width:5.0px;height:0.8px;background:#111"></div>
<div class="abs" style="left:135px;top:235px;width:426px;height:122.3px;background:#fff;border:1px solid #9fa3a8"></div>
<div class="t" style="left:141.00px;top:239.44px;font-size:8.7px;color:#111;letter-spacing:-0.163px;">Column</div>
<div class="t" style="left:286.00px;top:239.44px;font-size:8.7px;color:#111;letter-spacing:-0.426px;">Sort On</div>
<div class="t" style="left:427.00px;top:239.44px;font-size:8.7px;color:#111;letter-spacing:-0.048px;">Order</div>
<div class="abs" style="left:136px;top:251.3px;width:424px;height:15.6px;background:#d9d9d9"></div>
<div class="t" style="left:139.50px;top:253.04px;font-size:8.7px;color:#111;letter-spacing:-0.223px;">Sort by</div>
<div class="abs" style="left:177.5px;top:251.7px;width:95.0px;height:14.3px;background:#fff;border:1px solid #adadad"></div>
<div class="t" style="left:180.70px;top:254.74px;font-size:8.7px;color:#111;letter-spacing:-0.233px;">Column G</div>
<div class="abs" style="left:260.0px;top:251.7px;width:12.5px;height:14.3px;background:#e5f1fb;border:1px solid #0078d7"></div>
<svg class="abs" style="left:263.0px;top:257.3px;" width="6.5" height="4" viewBox="0 0 6.5 4"><path d="M0.3 0.3 L3.25 3.3 L6.2 0.3" fill="none" stroke="#333" stroke-width="1"/></svg>
<div class="abs" style="left:281px;top:251.7px;width:135px;height:14.3px;background:#fff;border:1px solid #adadad"></div>
<div class="t" style="left:284.20px;top:254.74px;font-size:8.7px;color:#111;letter-spacing:-0.187px;">Cell Values</div>
<div class="abs" style="left:403px;top:252.5px;width:12.2px;height:12.7px;background:#e1e1e1;border:1px solid #c8c8c8"></div>
<svg class="abs" style="left:406px;top:257.6px;" width="6.5" height="4" viewBox="0 0 6.5 4"><path d="M0.3 0.3 L3.25 3.3 L6.2 0.3" fill="none" stroke="#555" stroke-width="1"/></svg>
<div class="abs" style="left:424px;top:251.7px;width:133px;height:14.3px;background:#fff;border:1px solid #adadad"></div>
<div class="t" style="left:427.20px;top:254.74px;font-size:8.7px;color:#111;letter-spacing:-0.028px;">Oldest to Newest</div>
<div class="abs" style="left:544px;top:252.5px;width:12.2px;height:12.7px;background:#e1e1e1;border:1px solid #c8c8c8"></div>
<svg class="abs" style="left:547px;top:257.6px;" width="6.5" height="4" viewBox="0 0 6.5 4"><path d="M0.3 0.3 L3.25 3.3 L6.2 0.3" fill="none" stroke="#555" stroke-width="1"/></svg>
<div class="abs" style="left:443.7px;top:361px;width:54px;height:15.3px;background:#e1e1e1;border:1.6px solid #0078d7"></div>
<div class="t" style="left:465.00px;top:364.64px;font-size:8.7px;color:#111;letter-spacing:-0.785px;">OK</div>
<div class="abs" style="left:506px;top:361px;width:54px;height:15.3px;background:#e1e1e1;border:1px solid #adadad"></div>
<div class="t" style="left:520.30px;top:364.64px;font-size:8.7px;color:#111;letter-spacing:-0.297px;">Cancel</div>
<svg class="abs" style="left:558px;top:375px;" width="6" height="6" viewBox="0 0 6 6"><g fill="#b8b8b8"><rect x="4" y="0" width="1.2" height="1.2"/><rect x="2" y="2" width="1.2" height="1.2"/><rect x="4" y="2" width="1.2" height="1.2"/><rect x="0" y="4" width="1.2" height="1.2"/><rect x="2" y="4" width="1.2" height="1.2"/><rect x="4" y="4" width="1.2" height="1.2"/></g></svg>
<div class="abs" style="left:177px;top:266.3px;width:96.7px;height:117.6px;background:#fff;border:1px solid #6e6e6e"></div>
<div class="abs" style="left:260.7px;top:267.6px;width:12px;height:115.3px;background:#f0f0f0"></div>
<div class="abs" style="left:261.2px;top:306px;width:11px;height:64px;background:#c9c9c9"></div>
<svg class="abs" style="left:263.5px;top:271.8px;" width="6.5" height="4" viewBox="0 0 6.5 4"><path d="M0.3 3.6 L3.25 0.5 L6.2 3.6" fill="none" stroke="#444" stroke-width="1.2"/></svg>
<svg class="abs" style="left:263.5px;top:375.2px;" width="6.5" height="4" viewBox="0 0 6.5 4"><path d="M0.3 0.4 L3.25 3.5 L6.2 0.4" fill="none" stroke="#444" stroke-width="1.2"/></svg>
<div class="abs" style="left:178px;top:277.2px;width:82.5px;height:9.4px;background:#99c9ef;border:1px dotted #3f6f9f"></div>
<div class="t" style="left:179.60px;top:268.54px;font-size:8.7px;color:#111;letter-spacing:-0.071px;">Column F</div>
<div class="t" style="left:179.60px;top:278.19px;font-size:8.7px;color:#111;letter-spacing:-0.073px;">Column G</div>
<div class="t" style="left:179.60px;top:287.85px;font-size:8.7px;color:#111;letter-spacing:-0.073px;">Column H</div>
<div class="t" style="left:179.60px;top:297.50px;font-size:8.7px;color:#111;letter-spacing:-0.065px;">Column I</div>
<div class="t" style="left:179.60px;top:307.16px;font-size:8.7px;color:#111;letter-spacing:-0.069px;">Column J</div>
<div class="t" style="left:179.60px;top:316.81px;font-size:8.7px;color:#111;letter-spacing:-0.072px;">Column K</div>
<div class="t" style="left:179.60px;top:326.47px;font-size:8.7px;color:#111;letter-spacing:-0.070px;">Column L</div>
<div class="t" style="left:179.60px;top:336.12px;font-size:8.7px;color:#111;letter-spacing:-0.074px;">Column M</div>
<div class="t" style="left:179.60px;top:345.78px;font-size:8.7px;color:#111;letter-spacing:-0.073px;">Column N</div>
<div class="t" style="left:179.60px;top:355.43px;font-size:8.7px;color:#111;letter-spacing:-0.073px;">Column O</div>
<div class="t" style="left:179.60px;top:365.09px;font-size:8.7px;color:#111;letter-spacing:-0.072px;">Column P</div>
<div class="t" style="left:179.60px;top:374.74px;font-size:8.7px;color:#111;letter-spacing:-0.073px;">Column Q</div>
<div class="abs" style="left:134.5px;top:235px;width:142.5px;height:153.8px;border:3.3px solid #e9131b"></div>
<svg class="abs" style="left:0px;top:0px;pointer-events:none" width="690" height="461" viewBox="0 0 690 461"><path d="M399.6 176.6 L300.5 238.5" stroke="#e9131b" stroke-width="6" fill="none"/><path d="M280.2 251.2 L294.3 229.3 L306.2 248.1 Z" fill="#e9131b"/></svg>
<svg class="abs" style="left:231.8px;top:285.2px;" width="9" height="14" viewBox="0 0 9 14"><path d="M0.6 0.6 V11 L3 8.8 L4.9 13 L6.6 12.2 L4.8 8.2 H8 Z" fill="#fff" stroke="#222" stroke-width="0.9" stroke-linejoin="round"/></svg>
</body>
</html>
